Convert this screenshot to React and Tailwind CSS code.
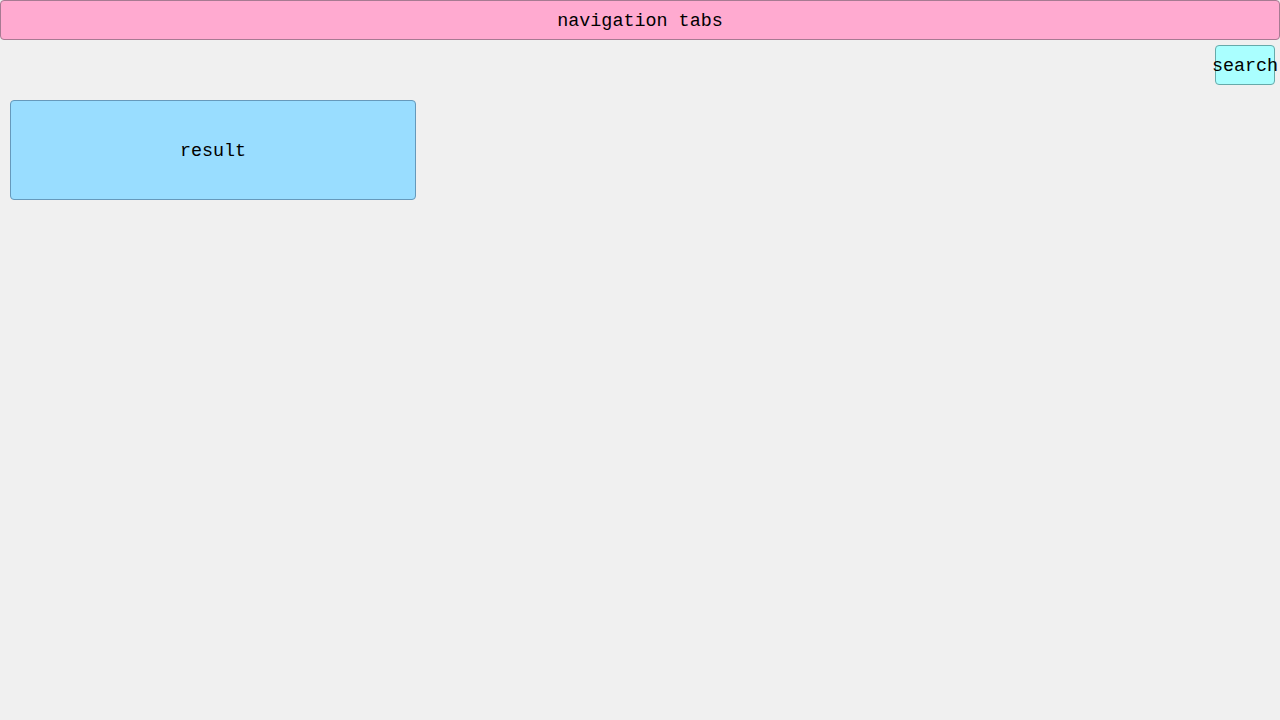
export default function App() {
  return (
    <div className="min-h-screen w-full bg-[#f0f0f0] text-[18.4px] text-black" style={{ fontFamily: '"Liberation Mono", "DejaVu Sans Mono", monospace' }}>
      <div className="flex h-[40px] items-center justify-center rounded-[4px] border border-[#a77a92] bg-[#ffaad0] pt-[3px]">
        navigation tabs
      </div>

      <div className="mt-[5px] flex justify-end pr-[5px]">
        <button className="flex h-[40px] w-[60px] items-center justify-center overflow-visible whitespace-nowrap rounded-[4px] border border-[#66aaaa] bg-[#aaffff] pt-[3px]">
          search
        </button>
      </div>

      <div className="ml-[10px] mt-[15px] flex h-[100px] w-[406px] items-center justify-center rounded-[4px] border border-[#6699bb] bg-[#99ddff] pt-[3px]">
        result
      </div>
    </div>
  );
}
